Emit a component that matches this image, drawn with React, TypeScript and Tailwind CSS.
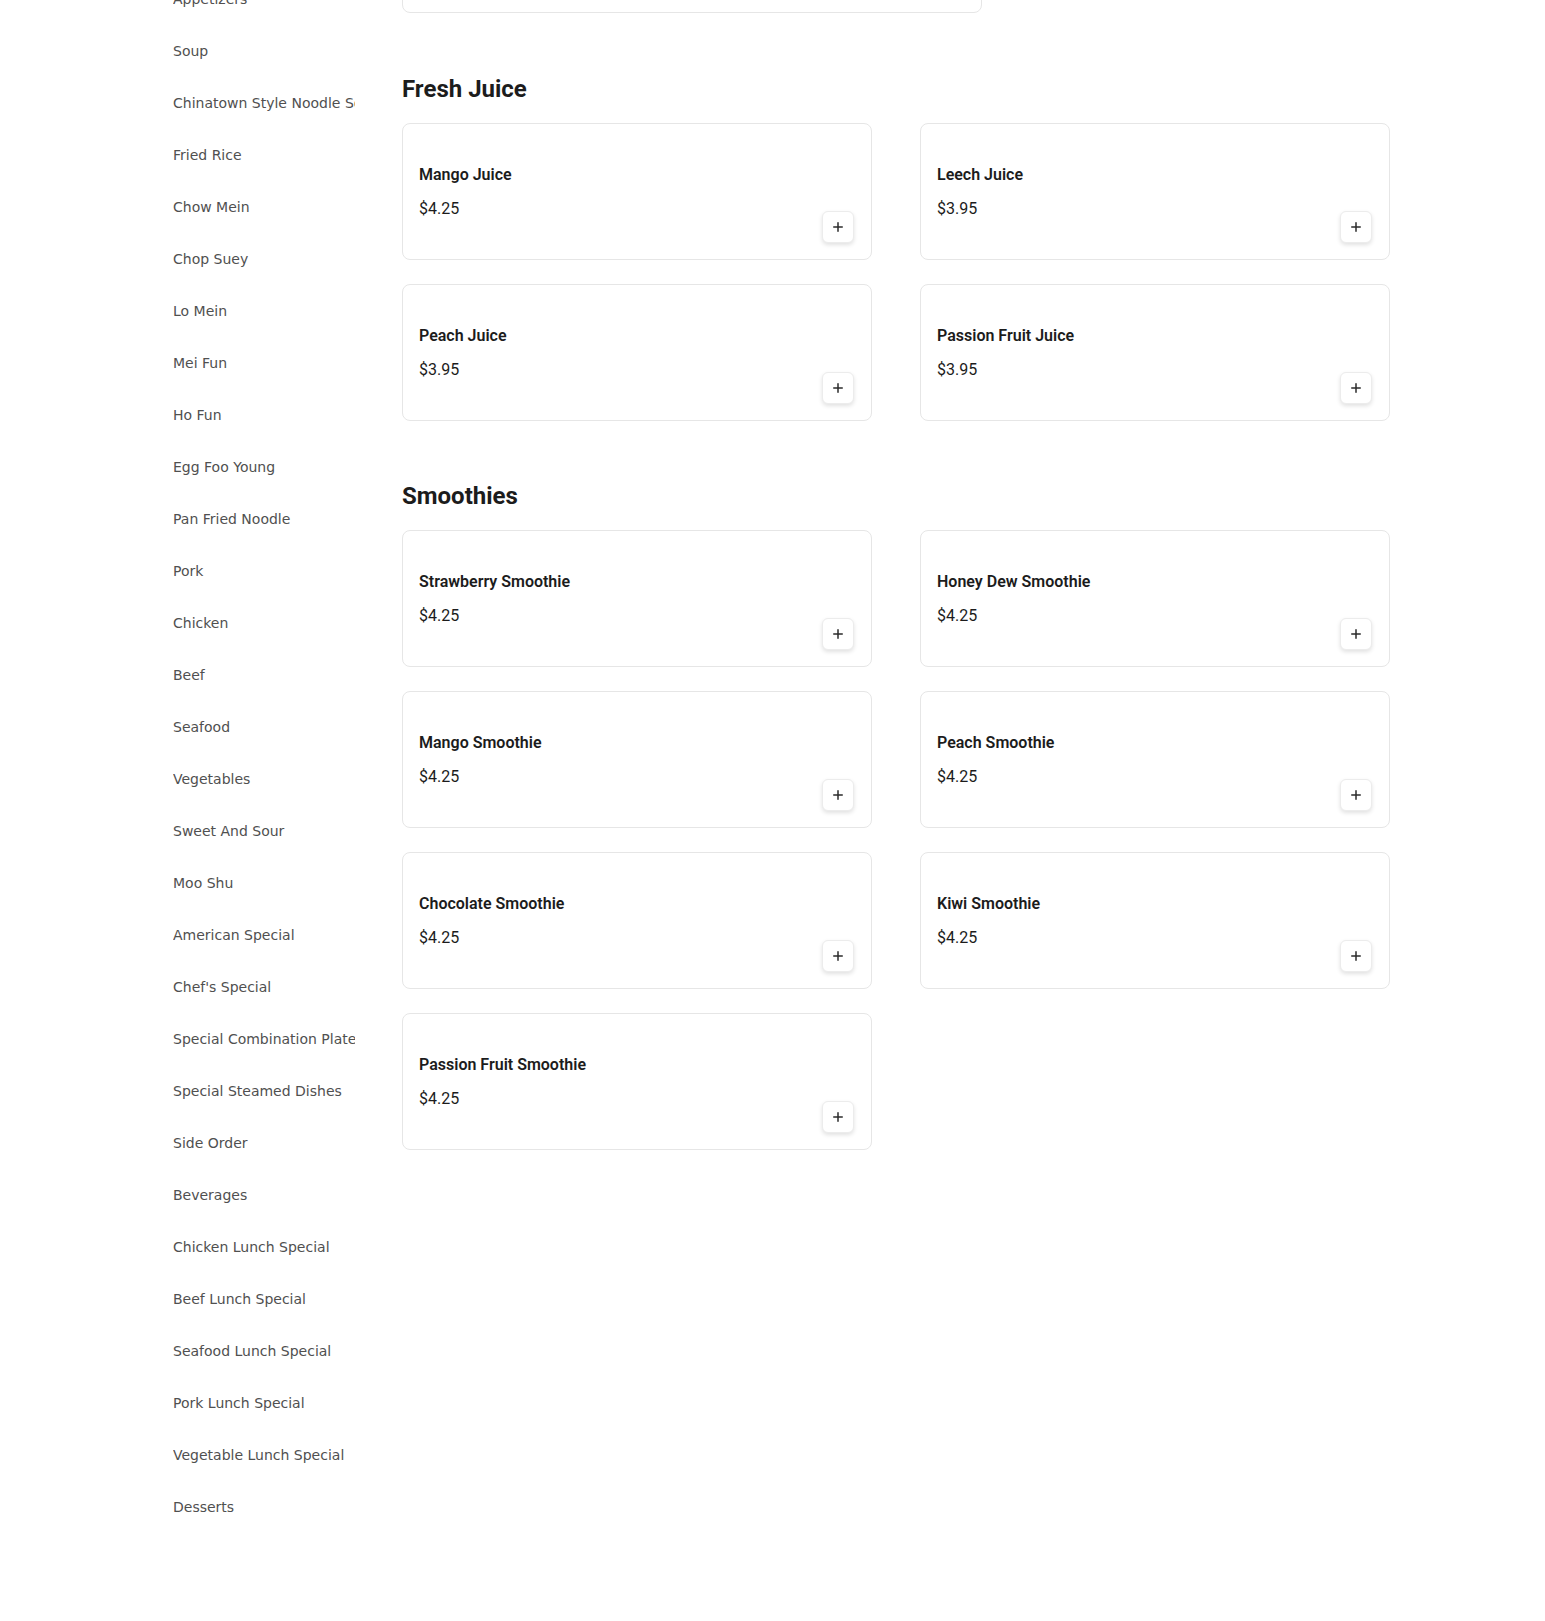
import React from 'react';

type MenuItem = {
  name: string;
  price: string;
};

type MenuSection = {
  title: string;
  items: MenuItem[];
};

const categories = [
  'Appetizers',
  'Soup',
  'Chinatown Style Noodle Soup',
  'Fried Rice',
  'Chow Mein',
  'Chop Suey',
  'Lo Mein',
  'Mei Fun',
  'Ho Fun',
  'Egg Foo Young',
  'Pan Fried Noodle',
  'Pork',
  'Chicken',
  'Beef',
  'Seafood',
  'Vegetables',
  'Sweet And Sour',
  'Moo Shu',
  'American Special',
  "Chef's Special",
  'Special Combination Plate',
  'Special Steamed Dishes',
  'Side Order',
  'Beverages',
  'Chicken Lunch Special',
  'Beef Lunch Special',
  'Seafood Lunch Special',
  'Pork Lunch Special',
  'Vegetable Lunch Special',
  'Desserts',
];

const sections: MenuSection[] = [
  {
    title: 'Fresh Juice',
    items: [
      { name: 'Mango Juice', price: '$4.25' },
      { name: 'Leech Juice', price: '$3.95' },
      { name: 'Peach Juice', price: '$3.95' },
      { name: 'Passion Fruit Juice', price: '$3.95' },
    ],
  },
  {
    title: 'Smoothies',
    items: [
      { name: 'Strawberry Smoothie', price: '$4.25' },
      { name: 'Honey Dew Smoothie', price: '$4.25' },
      { name: 'Mango Smoothie', price: '$4.25' },
      { name: 'Peach Smoothie', price: '$4.25' },
      { name: 'Chocolate Smoothie', price: '$4.25' },
      { name: 'Kiwi Smoothie', price: '$4.25' },
      { name: 'Passion Fruit Smoothie', price: '$4.25' },
    ],
  },
];

const PlusIcon = () => (
  <svg width="10" height="10" viewBox="0 0 10 10" fill="none">
    <path d="M5 0.75v8.5M0.75 5h8.5" stroke="#2b2b2b" strokeWidth="1.5" strokeLinecap="round" />
  </svg>
);

const ItemCard = ({ item }: { item: MenuItem }) => (
  <div className="h-[137px] flex justify-between p-4 pr-[17px] bg-white border border-[#e6e6e6] rounded-lg">
    <div className="pt-[23px]">
      <h3 className="text-base leading-6 font-semibold text-[#1c1c1c]">{item.name}</h3>
      <p className="mt-[10px] text-base leading-6 text-[#1c1c1c]">{item.price}</p>
    </div>
    {/* add to cart */}
    <button className="self-end w-8 h-8 flex items-center justify-center bg-white border border-[#ececec] rounded-md shadow-[0_2px_4px_rgba(0,0,0,0.12)]">
      <PlusIcon />
    </button>
  </div>
);

export default function App() {
  return (
    <div className="min-h-[1621px] bg-white overflow-hidden">
      <div className="flex items-start pl-[173px]">
        {/* Category nav */}
        <nav className="w-[182px] shrink-0 overflow-hidden mt-[-27px] font-['DejaVu_Sans',sans-serif]">
          {categories.map((c) => (
            <div key={c} className="h-[52px] flex items-center whitespace-nowrap text-sm leading-5 text-[#505050]">
              {c}
            </div>
          ))}
        </nav>

        {/* Menu */}
        <main className="ml-[47px] w-[988px] font-['Roboto',sans-serif]">
          <div className="mt-[-31px] h-[44px] w-[580px] border border-[#e6e6e6] rounded-lg bg-white" />

          {sections.map((s, i) => (
            <section key={s.title} className={i === 0 ? 'mt-[60px]' : 'mt-[59px]'}>
              <h2 className="text-2xl leading-8 font-bold text-[#1c1c1c] mb-[18px]">{s.title}</h2>
              <div className="grid grid-cols-2 gap-x-12 gap-y-6">
                {s.items.map((item) => (
                  <ItemCard key={item.name} item={item} />
                ))}
              </div>
            </section>
          ))}
        </main>
      </div>
    </div>
  );
}
